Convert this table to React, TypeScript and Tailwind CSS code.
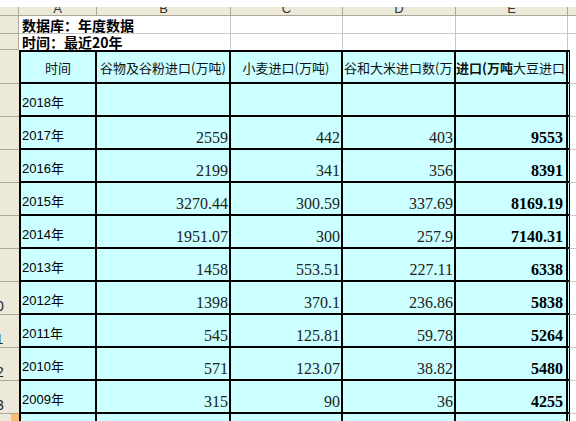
const ROWS = [
  { n: 4, year: '2018年', v: ['', '', '', ''] },
  { n: 5, year: '2017年', v: ['2559', '442', '403', '9553'] },
  { n: 6, year: '2016年', v: ['2199', '341', '356', '8391'] },
  { n: 7, year: '2015年', v: ['3270.44', '300.59', '337.69', '8169.19'] },
  { n: 8, year: '2014年', v: ['1951.07', '300', '257.9', '7140.31'] },
  { n: 9, year: '2013年', v: ['1458', '553.51', '227.11', '6338'] },
  { n: 10, year: '2012年', v: ['1398', '370.1', '236.86', '5838'] },
  { n: 11, year: '2011年', v: ['545', '125.81', '59.78', '5264'] },
  { n: 12, year: '2010年', v: ['571', '123.07', '38.82', '5480'] },
  { n: 13, year: '2009年', v: ['315', '90', '36', '4255'] },
]

const sans = "font-['Liberation_Sans','Noto_Sans_CJK_SC',sans-serif]"
const cjk = "font-['Noto_Sans_CJK_SC',sans-serif]"
const num = "font-['Liberation_Serif',serif]"

function RowNum({ n }: { n: number }) {
  return (
    <div className="flex h-full w-[19px] shrink-0 items-end overflow-hidden border-b border-[#aca899] bg-[#ece9d8] pb-[1px]">
      <span className={`-ml-[14px] w-[20px] shrink-0 text-center text-[14px] leading-none text-[#222] ${sans}`}>{n}</span>
    </div>
  )
}

function NumCell({ w, value, bold }: { w: string; value: string; bold?: boolean }) {
  return (
    <div
      className={`flex h-full shrink-0 items-end justify-end border-r-2 border-b-2 border-black bg-[#ccffff] pb-[2px] leading-none ${w} ${
        bold ? `pr-[3px] text-[16px] font-bold text-black ${num}` : `pr-[1px] text-[16px] text-[#222] ${num}`
      }`}
    >
      {value}
    </div>
  )
}

export default function App() {
  return (
    <div className="h-[421px] w-[576px] overflow-hidden bg-white">
      <div className="h-[7px] bg-white" />

      {/* column letters */}
      <div className={`flex h-[9px] text-[13px] text-[#333] ${sans}`}>
        <div className="w-[19px] shrink-0 border-r border-b border-[#aca899] bg-[#ece9d8]" />
        {[
          ['A', 'w-[78px]'],
          ['B', 'w-[134px]'],
          ['C', 'w-[112px]'],
          ['D', 'w-[113px]'],
          ['E', 'w-[112px]'],
        ].map(([l, w]) => (
          <div key={l} className={`h-full shrink-0 overflow-hidden border-r border-b border-[#aca899] bg-[#ece9d8] text-center ${w}`}>
            <div className="-mt-[5px] leading-[13px]">{l}</div>
          </div>
        ))}
        <div className="h-full flex-1 border-b border-[#aca899] bg-[#ece9d8]" />
      </div>

      {/* title rows */}
      <div className="flex h-[18px]">
        <div className="w-[19px] shrink-0 border-r border-b border-[#aca899] bg-[#ece9d8]" />
        <div className={`flex w-[212px] shrink-0 items-end overflow-hidden border-r border-b border-[#c8c8c8] pl-[3px] text-[14px] font-bold leading-[16px] text-black ${cjk}`}>
          数据库：年度数据
        </div>
        <div className="w-[112px] shrink-0 border-r border-b border-[#c8c8c8]" />
        <div className="w-[113px] shrink-0 border-r border-b border-[#c8c8c8]" />
        <div className="w-[112px] shrink-0 border-r border-b border-[#c8c8c8]" />
        <div className="flex-1 border-b border-[#c8c8c8]" />
      </div>
      <div className="flex h-[16px]">
        <div className="w-[19px] shrink-0 border-r border-b border-[#aca899] bg-[#ece9d8]" />
        <div className={`flex w-[212px] shrink-0 items-end overflow-hidden border-r border-[#c8c8c8] pl-[3px] text-[14px] font-bold leading-[15px] text-black ${cjk}`}>
          时间：最近20年
        </div>
        <div className="w-[112px] shrink-0 border-r border-[#c8c8c8]" />
        <div className="w-[113px] shrink-0 border-r border-[#c8c8c8]" />
        <div className="w-[112px] shrink-0 border-r border-[#c8c8c8]" />
        <div className="flex-1" />
      </div>

      {/* header row */}
      <div className={`flex h-[34px] text-[13px] leading-none text-[#111] ${cjk}`}>
        <div className="h-full w-[19px] shrink-0 border-b border-[#aca899] bg-[#ece9d8]" />
        <div className="flex h-full w-[78px] shrink-0 items-center justify-center border-x-2 border-y-2 border-black bg-[#ccffff]">时间</div>
        <div className="flex h-full w-[134px] shrink-0 items-center justify-center border-r-2 border-y-2 border-black bg-[#ccffff] whitespace-nowrap">
          谷物及谷粉进口(万吨)
        </div>
        <div className="flex h-full w-[112px] shrink-0 items-center justify-center border-r-2 border-y-2 border-black bg-[#ccffff] whitespace-nowrap">
          小麦进口(万吨)
        </div>
        <div className="flex h-full w-[113px] shrink-0 items-center overflow-hidden border-r-2 border-y-2 border-black bg-[#ccffff] pl-[1px] whitespace-nowrap">
          谷和大米进口数(万
        </div>
        <div className="flex h-full w-[112px] shrink-0 items-center overflow-hidden border-r-2 border-y-2 border-black bg-[#ccffff] whitespace-nowrap">
          <span className="font-bold">进口(万吨</span>
          <span>大豆进口数(万吨)</span>
        </div>
        <div className="h-full w-[1px] shrink-0 border-y-2 border-black bg-[#ccffff]" />
        <div className="h-full flex-1 border-l border-b border-l-black border-b-[#c8c8c8]" />
      </div>

      {/* data rows */}
      {ROWS.map((r) => (
        <div key={r.n} className="flex h-[33px]">
          <RowNum n={r.n} />
          <div className={`flex h-full w-[78px] shrink-0 items-center border-x-2 border-b-2 border-black bg-[#ccffff] pt-[5px] pl-[1px] text-[13px] leading-none text-black ${sans}`}>
            {r.year}
          </div>
          <NumCell w="w-[134px]" value={r.v[0]} />
          <NumCell w="w-[112px]" value={r.v[1]} />
          <NumCell w="w-[113px]" value={r.v[2]} />
          <NumCell w="w-[112px]" value={r.v[3]} bold />
          <div className="h-full w-[1px] shrink-0 border-b-2 border-black bg-[#ccffff]" />
          <div className="h-full flex-1 border-l border-b border-l-black border-b-[#c8c8c8]" />
        </div>
      ))}

      {/* next row, partly visible */}
      <div className="flex h-[10px]">
        <div className="h-full w-[19px] shrink-0 bg-[#ece9d8] pl-[11px]">
          <div className="h-full bg-[#fbbf72]" />
        </div>
        <div className="h-full w-[78px] shrink-0 border-x-2 border-black bg-[#ccffff]" />
        <div className="h-full w-[134px] shrink-0 border-r-2 border-black bg-[#ccffff]" />
        <div className="h-full w-[112px] shrink-0 border-r-2 border-black bg-[#ccffff]" />
        <div className="h-full w-[113px] shrink-0 border-r-2 border-black bg-[#ccffff]" />
        <div className="h-full w-[112px] shrink-0 border-r-2 border-black bg-[#ccffff]" />
        <div className="h-full w-[1px] shrink-0 bg-[#ccffff]" />
        <div className="h-full flex-1 border-l border-black" />
      </div>
    </div>
  )
}
